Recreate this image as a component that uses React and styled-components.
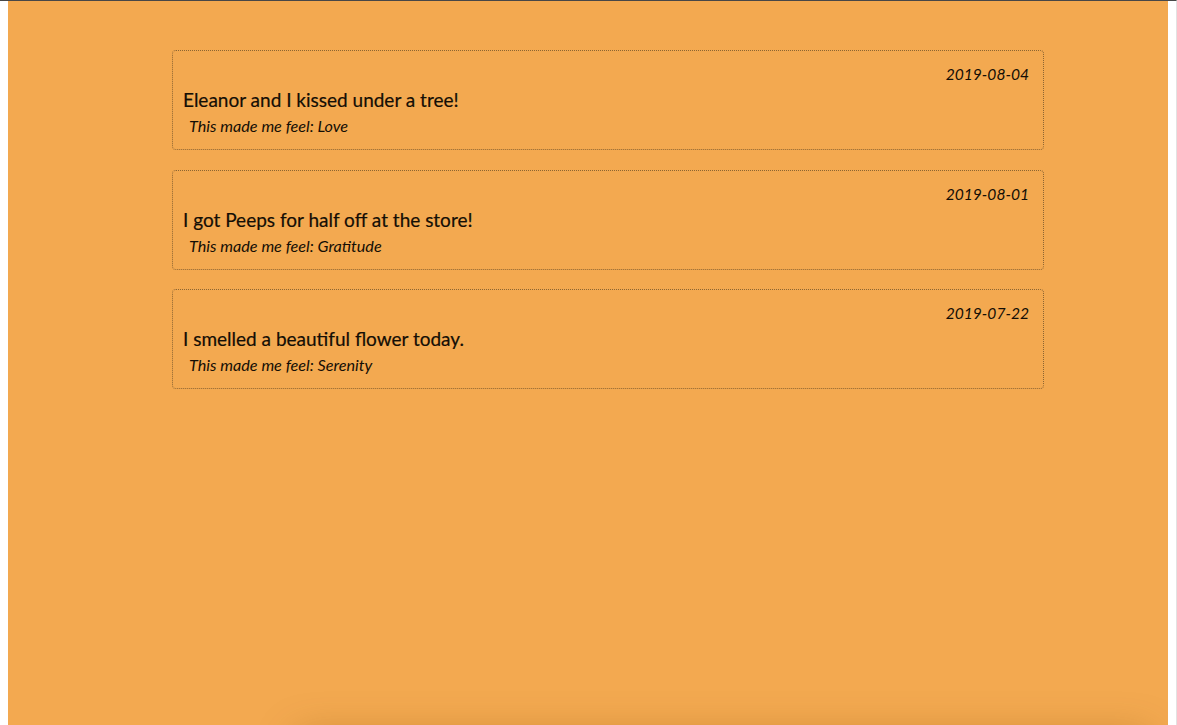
import styled, { createGlobalStyle } from "styled-components";

const GlobalStyle = createGlobalStyle`
  html {
    border-top: 1px solid #474747;
    border-right: 1px solid #e2e2e2;
    background: #fff;
    height: 724px;
    overflow: hidden;
  }
  body {
    margin: 0 8px;
    font-family: Lato, "Open Sans", sans-serif;
    color: #140e05;
    overflow: hidden;
  }
`;

const Page = styled.main`
  box-sizing: border-box;
  background: #f3a950;
  height: 724px;
  padding-top: 49px;
  position: relative;
  overflow: hidden;
`;

const List = styled.ul`
  list-style: none;
  margin: 0 0 0 164px;
  padding: 0;
  width: 872px;
`;

const Card = styled.li`
  box-sizing: border-box;
  height: 100px;
  margin-bottom: 19.5px;
  padding: 13px 14px 0 10px;
  border: 1px dotted #8c6532;
  border-radius: 4px;
  display: flex;
  flex-direction: column;
`;

const Date = styled.span`
  align-self: flex-end;
  font-style: italic;
  font-size: 15.6px;
  line-height: 20px;
`;

const Title = styled.h2`
  margin: 3px 0 0;
  font-size: 19px;
  font-weight: 400;
  line-height: 26px;
  -webkit-text-stroke: 0.2px #140e05;
`;

const Feeling = styled.p`
  margin: 2px 0 0 6px;
  font-style: italic;
  font-size: 16.2px;
  line-height: 21px;
`;

const Shade = styled.div`
  position: absolute;
  left: 300px;
  right: 30px;
  top: 745px;
  height: 60px;
  box-shadow: 0 0 40px 10px rgba(120, 70, 10, 0.35);
`;

const entries = [
  { date: "2019-08-04", text: "Eleanor and I kissed under a tree!", feeling: "Love" },
  { date: "2019-08-01", text: "I got Peeps for half off at the store!", feeling: "Gratitude" },
  { date: "2019-07-22", text: "I smelled a beautiful flower today.", feeling: "Serenity" },
];

const App = () => {
  return (
    <>
      <GlobalStyle />
      <Page>
        <List>
          {entries.map((entry) => (
            <Card key={entry.date}>
              <Date>{entry.date}</Date>
              <Title>{entry.text}</Title>
              <Feeling>This made me feel: {entry.feeling}</Feeling>
            </Card>
          ))}
        </List>
        <Shade />
      </Page>
    </>
  );
};

export default App;
